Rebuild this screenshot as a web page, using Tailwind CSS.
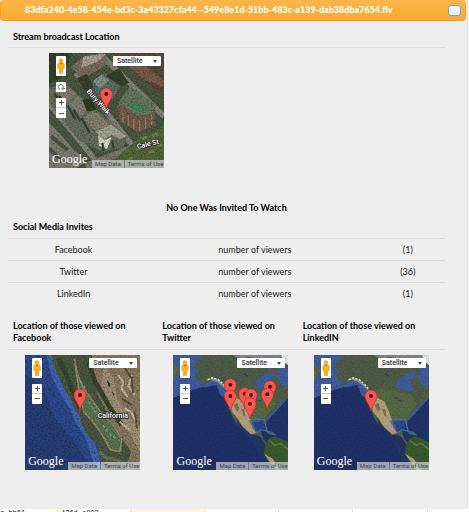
<!DOCTYPE html>
<html lang="en">
<head>
  <meta charset="UTF-8" />
  <meta name="viewport" content="width=device-width, initial-scale=1.0" />
  <title>Stream details</title>
  <script src="https://cdn.jsdelivr.net/npm/@tailwindcss/browser@4"></script>
</head>
<body class="bg-white overflow-hidden font-[Lato,sans-serif] text-[9px] leading-3 text-[#222]">

  <!-- Shared drawings -->
  <svg class="hidden" aria-hidden="true">
    <symbol id="pin" viewBox="0 0 40 68">
      <path d="M20 66C18 48 2 36 2 20a18 18 0 0 1 36 0C38 36 22 48 20 66z" fill="#f8574e" stroke="#b8342f" stroke-width="2" />
      <circle cx="20" cy="20" r="6" fill="#4a0d0b" />
    </symbol>
    <symbol id="pegman" viewBox="0 0 30 57">
      <circle cx="15" cy="12" r="6" fill="#f6b51d" stroke="#c98512" />
      <path d="M8 19h14l3 4v13h-4l-1 16h-4l-1-12-1 12h-4L9 36H5V23z" fill="#f6b51d" stroke="#c98512" />
      <path d="M10 19l5 5 5-5z" fill="#d9552b" />
    </symbol>
    <symbol id="america" viewBox="0 0 345 345">
      <rect width="345" height="345" fill="#223468" />
      <path d="M0 0H345V130L290 190 240 235 160 130 90 95 0 130z" fill="#405c9c" />
      <path d="M0 130L60 105 130 90 175 200 230 250 280 345H0z" fill="#1f3168" />
      <path d="M0 30L18 38 22 55 10 62 0 85z" fill="#5a6450" />
      <path d="M95 0L70 18 62 38 80 48 66 58 72 74 92 82 82 100 108 78 132 78 152 98 166 116 170 165 180 188 196 212 190 190 212 220 234 240 252 240 264 248 276 268 286 270 270 250 264 228 250 230 238 216 240 200 256 194 270 196 278 216 282 196 290 180 304 164 322 154 314 144 345 132V98L322 90 310 62 288 76 298 104 284 110 266 102 246 98 246 80 272 60 296 50 320 62 312 38 345 40V0z" fill="#4e5c48" />
      <path d="M165 116L200 100 250 110 290 118 310 146 284 180 270 194 240 198 200 180 172 165z" fill="#566a46" />
      <path d="M172 140L190 128 212 140 225 170 234 196 238 218 250 234 234 238 208 214 192 188 176 170z" fill="#b39f7a" />
      <path d="M182 150l10-6 8 18-8 8zM204 160l10 4 4 22-8-6z" fill="#7b7355" />
      <path d="M98 78l20-12 18 8 18 18 12 18-16-14-18-16-18-6z" fill="#8f9a90" />
      <path d="M104 74l14-6 18 6 22 20 8 14" fill="none" stroke="#eef1f1" stroke-width="4" stroke-dasharray="6 5" />
      <path d="M180 0l20 12 30-6 14 10 28-2 12 12 30-8 30 6V0z" fill="#7e888a" />
      <path d="M196 20l12 8M220 34l10 6M214 56l10 8M240 128l14 2M256 134l8 6" stroke="#2e4478" stroke-width="4" />
      <path d="M325 0h20v30l-12-8z" fill="#dfe5e8" />
      <path d="M230 198l14-6 30 2 8 34-20-4-10 10z" fill="none" stroke="#4572b4" stroke-width="4" />
      <path d="M240 202l30-4 6 22-18 2-10 6z" fill="#2c4687" />
      <path d="M276 226l22 6 10 8-20-4z" fill="#4c6a48" stroke="#4677b8" stroke-width="2" />
      <path d="M276 270L286 252 302 244 326 252 345 262V345H306L286 320 272 298z" fill="#3a5a2e" />
      <path d="M274 296L288 318 308 345H320L300 312z" fill="#b09d78" />
      <path d="M288 256l16 14 20-4 21 18" fill="none" stroke="#627645" stroke-width="5" />
    </symbol>
    <symbol id="california" viewBox="0 0 345 345">
      <rect width="345" height="345" fill="#2e4a8e" />
      <path d="M0 60L50 90 90 190 150 260 200 345H0z" fill="#293f78" />
      <path d="M76 0L90 60 120 118 146 160 160 196 190 240 206 290 226 345" fill="none" stroke="#4264b0" stroke-width="22" />
      <path d="M82 0L84 26 100 66 120 104 140 136 150 164 164 184 172 212 190 244 216 270 224 304 240 345H345V0z" fill="#4b5841" />
      <path d="M200 0H345V345H300L318 290 270 220 215 110z" fill="#8a7a62" />
      <path d="M236 30l30 40 10 60 40 60 30 30v70l-36-60-44-60-36-80z" fill="#a19177" />
      <path d="M148 12L158 60 176 100 198 130 226 170 262 206 290 252 286 290 256 284 232 240 204 200 176 170 164 120z" fill="#5a7653" stroke="#9a8a68" stroke-width="5" />
      <path d="M232 210l20 24 24 20M158 64l22 34M190 140l30 46" fill="none" stroke="#84a075" stroke-width="5" stroke-dasharray="10 6" />
      <path d="M100 10l20 40 24 62 22 50M190 20l20 60 40 70 40 60" fill="none" stroke="#38472f" stroke-width="14" />
      <path d="M222 292l20 16 30 6 30 14 34-4M240 320l30 10" fill="none" stroke="#6c725e" stroke-width="10" />
      <path d="M246 74l10 14-4 10zM262 110l6 8-4 6z" fill="#1d2745" />
      <path d="M280 60l14 20-4 22 18 24M320 60l-10 34 20 26M300 160l20 14 16 34M284 200l30 24" fill="none" stroke="#cbbb9d" stroke-width="6" />
      <path d="M300 40l20 30 4 44M290 130l30 20M330 170l6 50" fill="none" stroke="#5a5340" stroke-width="6" />
    </symbol>
    <symbol id="london" viewBox="0 0 345 345">
      <rect width="345" height="345" fill="#4c5842" />
      <!-- streets -->
      <path d="M-10 140L130 310 150 345M80 60L260 290M150 0L345 190" fill="none" stroke="#85847a" stroke-width="16" />
      <path d="M110 340L250 285 345 262" fill="none" stroke="#787c69" stroke-width="20" />
      <!-- rear terrace -->
      <path d="M66 42L104 10 170 2 176 34 100 78z" fill="#7b6f5f" />
      <path d="M104 10L170 2 150 24 96 46z" fill="#aba494" />
      <path d="M190 0H345V130L290 88 240 40z" fill="#584a3e" />
      <path d="M240 42l40-10 65 50v20l-56-20z" fill="#7c5c4c" />
      <!-- left terrace -->
      <path d="M0 108L44 88 236 250 222 284 160 296 90 262 0 150z" fill="#66705f" />
      <path d="M44 88L82 122 52 150 14 112zM86 128L128 164 96 190 58 156zM134 170L180 212 146 238 102 198z" fill="#848070" />
      <path d="M140 236l46-22 48 36-24 8-22-12-24 14z" fill="#a5a592" />
      <path d="M148 246l18 16 22-10-14 36-24-10z" fill="#dcdccb" />
      <path d="M16 120l24 40M56 158l24 42M98 196l24 44M30 128l20 30M74 170l20 34M160 270l4 24M190 264l4 24" stroke="#37473a" stroke-width="7" />
      <path d="M0 210l60 60 50 60-30 15H0z" fill="#807e74" />
      <path d="M6 250l50 42M0 286l40 40M36 236l46 56" stroke="#4a5a46" stroke-width="12" />
      <!-- right blocks -->
      <path d="M124 96L168 60 214 98 190 140 150 130z" fill="#5b7065" />
      <path d="M132 84l26-20 22 18-28 24z" fill="#80968a" />
      <path d="M204 160L240 112 318 164 320 216 268 240 214 206z" fill="#735d4a" />
      <path d="M208 150L242 100 318 152 310 182 264 188z" fill="#66795f" />
      <path d="M244 140l30 12 24 12-22 14-36-16z" fill="#4a7f5c" />
      <path d="M222 180v26M238 188v30M254 198v30M272 200v34M290 194v34M308 186v30" stroke="#96806a" stroke-width="4" />
      <!-- trees -->
      <path d="M0 0h70l-14 34-30 14 14 26-40 20zM170 70l40-24 30 44-22 10zM84 76l30-14 20 40-24 16z" fill="#35442a" />
      <path d="M262 262l24-24 26 2 33-24V345H200l12-40z" fill="#55683a" />
      <path d="M100 140l26-4 18 34-30 6z" fill="#303e26" />
      <path d="M280 258l14-8M310 250l16-10M262 290l14-6M300 300l14-6M326 280l14-6M240 318l12-4" stroke="#74864c" stroke-width="8" />
    </symbol>
    <filter id="grain" x="0" y="0" width="100%" height="100%">
      <feTurbulence type="fractalNoise" baseFrequency="0.2" numOctaves="3" seed="7" />
      <feColorMatrix values="0 0 0 0 0  0 0 0 0 0  0 0 0 0 0  2.4 0 0 0 -0.95" />
    </filter>
  </svg>

  <main class="mr-px bg-[#eee] border-r border-[#ddd] rounded-b pb-[39px]">
    <header class="flex items-center justify-between h-[21px] pl-6 pr-1 mr-px rounded-sm border border-t-0 border-[#f5a11c] bg-linear-to-b from-[#fbb54c] to-[#f8ab2f]">
      <h1 class="font-black text-[9px] text-white whitespace-nowrap">83dfa240-4e58-454e-bd3c-3a43327cfa44--549e8e1d-51bb-483c-a139-dab38dba7654.flv</h1>
      <button type="button" aria-label="Close" class="w-[13px] h-[11px] rounded-[3px] border border-[#7ba3bd] bg-linear-to-b from-white to-[#e3ebf0]"></button>
    </header>

    <div class="ml-2 mr-[22px]">
      <h2 class="px-[5px] pt-[10px] pb-1 border-b border-[#dcdcdc] font-bold text-black">Stream broadcast Location</h2>
      <div class="pl-[41px] pt-[5px]" data-map="stream"></div>

      <p class="mt-[34px] text-center font-bold text-black">No One Was Invited To Watch</p>

      <h2 class="mt-[7px] px-[5px] pb-[5px] font-bold text-black">Social Media Invites</h2>
      <table class="w-full table-fixed text-center" aria-label="Social Media Invites">
        <colgroup>
          <col class="w-[30%]" />
          <col class="w-[53%]" />
          <col class="w-[17%]" />
        </colgroup>
        <tbody>
          <tr class="h-[22px] border-t border-[#dcdcdc]"><td>Facebook</td><td>number of viewers</td><td>(1)</td></tr>
          <tr class="h-[22px] border-t border-[#dcdcdc]"><td>Twitter</td><td>number of viewers</td><td>(36)</td></tr>
          <tr class="h-[22px] border-t border-[#dcdcdc]"><td>LinkedIn</td><td>number of viewers</td><td>(1)</td></tr>
        </tbody>
      </table>

      <div class="grid grid-cols-[149fr_140fr_147fr] mt-[15px]">
        <section>
          <h2 class="px-[5px] pb-[5px] border-b border-[#dcdcdc] font-bold text-black">Location of those viewed on Facebook</h2>
          <div class="flex justify-center pt-[5px]" data-map="facebook"></div>
        </section>
        <section>
          <h2 class="px-[5px] pb-[5px] border-b border-[#dcdcdc] font-bold text-black">Location of those viewed on Twitter</h2>
          <div class="flex justify-center pt-[5px] pl-[7px]" data-map="twitter"></div>
        </section>
        <section>
          <h2 class="px-[5px] pb-[5px] border-b border-[#dcdcdc] font-bold text-black">Location of those viewed on LinkedIN</h2>
          <div class="flex justify-center pt-[5px]" data-map="linkedin"></div>
        </section>
      </div>
    </div>
  </main>

  <!-- Grid behind the dialog -->
  <div class="grid grid-cols-[59fr_72fr_75fr_73fr_74fr_75fr_41fr] h-[10px] overflow-hidden font-[Liberation_Mono,monospace] text-[7px] leading-[8px]">
    <div class="border-r-2 border-[#fbf58a]">c-bb61</div>
    <div class="border-r border-[#fbf58a] pl-0.5">436d-a803</div>
    <div class="border-x border-[#e5e5e5] bg-[#fdf6e0]"></div>
    <div class="border-r border-[#ddd]"></div>
    <div class="border-r border-[#ddd]"></div>
    <div class="border-r border-[#ddd]"></div>
    <div></div>
  </div>

  <script>
    const LABEL = 'font-family="Roboto, sans-serif" font-size="21" font-weight="500" fill="#fff" stroke="#222" stroke-width="4" paint-order="stroke"';

    // pins are the centres of the marker heads, in map units (345 x 345)
    const maps = {
      stream: {
        land: 'london', rotate: true, pins: [[172, 123]],
        labels: `<text ${LABEL} transform="translate(112 116) rotate(48)">Bury Walk</text>
                 <text ${LABEL} transform="translate(266 288) rotate(-14)">Cale St</text>`
      },
      facebook: {
        land: 'california', pins: [[165, 120]],
        labels: `<text ${LABEL} x="218" y="189">California</text>`
      },
      twitter: {
        land: 'america', labels: '',
        pins: [[172, 89], [291, 95], [215, 116], [283, 118], [234, 120], [172, 123], [231, 146]]
      },
      linkedin: { land: 'america', labels: '', pins: [[171, 123]] }
    };

    const rotateButton = `
      <button type="button" aria-label="Rotate map" class="flex items-center justify-center w-[10px] h-[10px] mb-[6px] rounded-[1px] bg-white">
        <svg class="w-2 h-2" viewBox="0 0 24 24" fill="none" stroke="#555" stroke-width="3"><path d="M4 18h5M5 14a7 7 0 1 1 13 0v5M13 15l5 5 5-5" /></svg>
      </button>`;

    document.querySelectorAll('[data-map]').forEach(el => {
      const name = el.dataset.map;
      const map = maps[name];
      const pins = map.pins.map(([x, y]) => `<use href="#pin" x="${x - 20}" y="${y - 20}" width="40" height="68" />`).join('');
      el.innerHTML = `
        <div class="relative size-[115px] overflow-hidden">
          <svg class="block size-full" viewBox="0 0 345 345" role="img" aria-label="${name} map">
            <use href="#${map.land}" width="345" height="345" />
            <rect width="345" height="345" filter="url(#grain)" opacity="${map.land === 'america' ? 0.15 : 0.3}" />
            ${map.labels}${pins}
          </svg>
          <div class="absolute left-[7px] top-[3px] flex flex-col">
            <button type="button" aria-label="Street View" class="w-[10px] h-5 mb-[6px] rounded-[1px] bg-white">
              <svg class="w-[10px] h-5" viewBox="0 0 30 57"><use href="#pegman" width="30" height="57" /></svg>
            </button>
            ${map.rotate ? rotateButton : ''}
            <div class="flex flex-col rounded-[1px] bg-white divide-y divide-[#ccc]">
              <button type="button" aria-label="Zoom in" class="flex items-center justify-center w-[10px] h-[10px]">
                <svg class="w-[5px] h-[5px]" viewBox="0 0 5 5"><path d="M2 0h1v2h2v1H3v2H2V3H0V2h2z" fill="#555" /></svg>
              </button>
              <button type="button" aria-label="Zoom out" class="flex items-center justify-center w-[10px] h-[10px]">
                <svg class="w-[5px] h-[5px]" viewBox="0 0 5 5"><path d="M0 2h5v1H0z" fill="#555" /></svg>
              </button>
            </div>
          </div>
          <div class="absolute right-[3px] top-[3px] w-12 h-[10px]">
            <select aria-label="Map type" class="block appearance-none w-full h-full pl-1 rounded-[1px] bg-white font-[Roboto,sans-serif] font-medium text-[7px] leading-[10px] text-[#333]">
              <option>Satellite</option>
              <option>Map</option>
            </select>
            <svg class="absolute right-1 top-1 w-1 h-[3px] pointer-events-none" viewBox="0 0 4 3"><path d="M0 0h4L2 3z" fill="#444" /></svg>
          </div>
          <span class="absolute left-[3px] bottom-[3px] font-[Liberation_Serif,serif] text-[12px] leading-3 text-white">Google</span>
          <div class="absolute right-0 bottom-0 flex w-[72px] h-2 bg-[#c9ccd0]/75 divide-x divide-[#777] font-[Roboto,sans-serif] text-[6px] leading-[8px] text-[#444] whitespace-nowrap">
            <a href="#" class="px-[3px]">Map Data</a>
            <a href="#" class="px-[3px]">Terms of Use</a>
          </div>
        </div>`;
    });
  </script>
</body>
</html>
